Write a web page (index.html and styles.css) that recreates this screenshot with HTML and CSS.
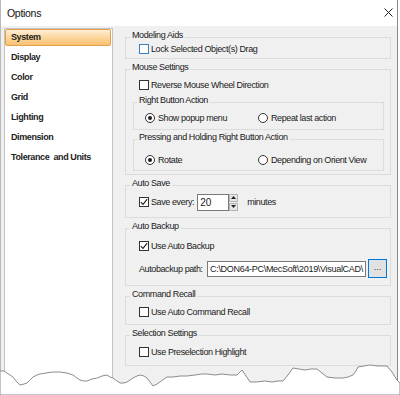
FILE: index.html
```html
<!DOCTYPE html>
<html lang="en">
<head>
    <meta charset="UTF-8">
    <title>Options</title>
    <link rel="stylesheet" href="styles.css">
</head>
<body>
    <div class="window">
        <div class="titlebar">
            <span class="title">Options</span>
            <svg class="close" width="9" height="9" viewBox="0 0 9 9">
                <path d="M0.5 0.5L8.5 8.5M8.5 0.5L0.5 8.5" stroke="#1e1e1e" stroke-width="1"/>
            </svg>
        </div>

        <div class="main">
            <ul class="nav">
                <li class="nav-item selected">System</li>
                <li class="nav-item">Display</li>
                <li class="nav-item">Color</li>
                <li class="nav-item">Grid</li>
                <li class="nav-item">Lighting</li>
                <li class="nav-item">Dimension</li>
                <li class="nav-item">Tolerance&nbsp; and Units</li>
            </ul>

            <div class="panel">
                <fieldset class="group modeling">
                    <legend>Modeling Aids</legend>
                    <div class="row check">
                        <span class="box focus"></span>Lock Selected Object(s) Drag
                    </div>
                </fieldset>

                <fieldset class="group mouse">
                    <legend>Mouse Settings</legend>
                    <div class="row check">
                        <span class="box"></span>Reverse Mouse Wheel Direction
                    </div>
                    <fieldset class="group sub right-btn">
                        <legend>Right Button Action</legend>
                        <div class="row radios">
                            <span class="opt"><span class="radio on"></span>Show popup menu</span>
                            <span class="opt"><span class="radio"></span>Repeat last action</span>
                        </div>
                    </fieldset>
                    <fieldset class="group sub holding">
                        <legend>Pressing and Holding Right Button Action</legend>
                        <div class="row radios">
                            <span class="opt"><span class="radio on"></span>Rotate</span>
                            <span class="opt"><span class="radio"></span>Depending on Orient View</span>
                        </div>
                    </fieldset>
                </fieldset>

                <fieldset class="group autosave">
                    <legend>Auto Save</legend>
                    <div class="row check save-row">
                        <span class="box">
                            <svg width="8" height="8" viewBox="0 0 8 8"><path d="M0.8 4.2L3 6.4L7.2 1.2" fill="none" stroke="#1e1e1e" stroke-width="1.1"/></svg>
                        </span>
                        <span class="save-label">Save every:</span>
                        <input class="spin-value" type="text" value="20" readonly>
                        <span class="spin">
                            <span class="spin-btn"><svg width="5" height="3" viewBox="0 0 5 3"><path d="M0 3L2.5 0L5 3Z" fill="#222"/></svg></span>
                            <span class="spin-btn"><svg width="5" height="3" viewBox="0 0 5 3"><path d="M0 0L2.5 3L5 0Z" fill="#222"/></svg></span>
                        </span>
                        <span class="unit">minutes</span>
                    </div>
                </fieldset>

                <fieldset class="group backup">
                    <legend>Auto Backup</legend>
                    <div class="row check">
                        <span class="box">
                            <svg width="8" height="8" viewBox="0 0 8 8"><path d="M0.8 4.2L3 6.4L7.2 1.2" fill="none" stroke="#1e1e1e" stroke-width="1.1"/></svg>
                        </span>Use Auto Backup
                    </div>
                    <div class="row check path-row">
                        <span class="path-label">Autobackup path:</span>
                        <input class="path-input" type="text" value="C:\DON64-PC\MecSoft\2019\VisualCAD\" readonly>
                        <button class="browse">...</button>
                    </div>
                </fieldset>

                <fieldset class="group recall">
                    <legend>Command Recall</legend>
                    <div class="row check">
                        <span class="box"></span>Use Auto Command Recall
                    </div>
                </fieldset>

                <fieldset class="group selection">
                    <legend>Selection Settings</legend>
                    <div class="row check">
                        <span class="box"></span>Use Preselection Highlight
                    </div>
                </fieldset>
            </div>
        </div>
    </div>

    <!-- bordo strappato in basso -->
    <svg class="tear" width="400" height="45" viewBox="0 350 400 45">
        <path d="M0 371 L4 371 L7 373 L10 375 L13 377 L16 381 L20 385 L24 384 L27 383 L30 380 L33 377 L37 375 L40 374 L46 373 L53 372 L60 372 L67 373 L70 374 L73 375 L77 378 L80 380 L84 381 L87 381 L92 379 L97 378 L102 376 L107 375 L110 377 L113 378 L117 381 L120 383 L124 383 L127 382 L130 380 L133 378 L137 376 L140 375 L144 376 L147 378 L150 382 L153 386 L157 384 L160 382 L164 379 L167 377 L170 377 L173 377 L180 376 L187 376 L195 375 L202 374 L207 374 L215 375 L222 374 L230 375 L237 375 L240 372 L242 370 L246 376 L250 382 L256 382 L265 381 L272 382 L278 381 L283 381 L288 375 L293 368 L299 369 L305 370 L311 369 L317 369 L322 373 L327 377 L335 378 L343 378 L348 377 L353 375 L356 371 L358 367 L364 366 L370 365 L378 366 L387 366 L392 372 L397 380 L400 383 L400 395 L0 395 Z" fill="#fff" stroke="#8c8c8c" stroke-width="1"/>
    </svg>
</body>
</html>
```

FILE: styles.css
```css
body {
    margin: 0;
    background-color: #fff;
    font-family: "Liberation Sans", Arial, sans-serif;
    font-size: 9px;
    letter-spacing: -0.4px;
    color: #1a1a1a;
    overflow: hidden;
}

.window {
    width: 398px;
    height: 395px;
    box-sizing: border-box;
    background-color: #f0f0f0;
    border-left: 1px solid #b9b9b9;
    border-right: 1px solid #8a8a8a;
    display: flex;
    flex-direction: column;
}

.titlebar {
    height: 25px;
    flex: none;
    background-color: #fff;
    display: flex;
    align-items: center;
    justify-content: space-between;
    padding: 0 4px 1px 6px;
}

.title {
    font-size: 10.5px;
    letter-spacing: -0.3px;
    color: #111;
}

.main {
    flex: 1;
    display: flex;
    gap: 12px;
    padding: 2px 0 0 3px;
    min-height: 0;
}

/* menu a sinistra */
.nav {
    list-style: none;
    margin: 0;
    padding: 0;
    width: 109px;
    box-sizing: border-box;
    background-color: #fff;
    border: 1px solid #c3c3c3;
    font-weight: bold;
    color: #222;
}

.nav-item {
    height: 20px;
    line-height: 16px;
    padding-left: 6px;
    white-space: nowrap;
}

.nav-item.selected {
    height: 17px;
    line-height: 14px;
    box-sizing: border-box;
    margin: 0 1px 3px 0;
    padding-left: 5px;
    border: 1px solid #e5a04d;
    border-radius: 2px;
    background: linear-gradient(#fdeed6, #fcd9a3 45%, #f9c06e);
}

/* pannello a destra */
.panel {
    width: 266px;
    display: flex;
    flex-direction: column;
    gap: 3px;
    padding-top: 2px;
}

.group {
    margin: 0;
    padding: 0;
    min-width: 0;
    border: 1px solid #dcdcdc;
}

.group legend {
    margin-left: 4px;
    padding: 0 2px 3px;
    line-height: 11px;
    white-space: nowrap;
}

.row {
    display: flex;
    align-items: center;
    height: 10px;
    white-space: nowrap;
}

.check {
    margin-left: 13px;
}

.box {
    width: 10px;
    height: 10px;
    box-sizing: border-box;
    flex: none;
    border: 1px solid #333;
    background-color: #fff;
    margin-right: 2px;
    display: flex;
    align-items: center;
    justify-content: center;
}

.box.focus {
    border-color: #3b7fc4;
}

.sub {
    margin: 0 6px 0 7px;
}

.sub legend {
    margin-left: 3px;
}

.radios {
    margin-left: 11px;
}

.opt {
    width: 113px;
    display: flex;
    align-items: center;
}

.radio {
    width: 10px;
    height: 10px;
    box-sizing: border-box;
    flex: none;
    border: 1px solid #333;
    border-radius: 50%;
    background-color: #fff;
    margin-right: 3px;
    display: flex;
    align-items: center;
    justify-content: center;
}

.radio.on::after {
    content: "";
    width: 4px;
    height: 4px;
    border-radius: 50%;
    background-color: #1e1e1e;
}

/* spaziature dei gruppi */
.modeling { padding-bottom: 4px; }

.mouse { padding-bottom: 3px; }
.mouse > .row { margin-top: 4px; }
.right-btn { margin-top: 5px; padding-bottom: 6px; }
.right-btn .row { margin-top: 4px; }
.holding { margin-top: 2px; padding-bottom: 5px; }
.holding .row { margin-top: 9px; }

.autosave { padding-bottom: 6px; }
.save-row { height: 18px; margin-top: 1px; }

.backup { padding-bottom: 7px; }
.backup .row { margin-top: 6px; }
.backup .path-row { height: 19px; margin-top: 8px; }

.recall { padding-bottom: 7px; }
.recall .row { margin-top: 4px; }

.selection { padding-bottom: 8px; }
.selection .row { margin-top: 5px; }

/* campi */
.save-label {
    margin-right: 3px;
}

.spin-value {
    width: 32px;
    height: 17px;
    box-sizing: border-box;
    margin: 0;
    border: 1px solid #7a7a7a;
    background-color: #fff;
    padding: 0 0 0 2px;
    font: inherit;
    font-size: 10px;
    letter-spacing: 0;
    color: #1a1a1a;
    outline: none;
}

.spin {
    width: 9px;
    height: 17px;
    display: flex;
    flex-direction: column;
    gap: 1px;
}

.spin-btn {
    flex: 1;
    background-color: #e6e6e6;
    border: 1px solid #b4b4b4;
    display: flex;
    align-items: center;
    justify-content: center;
}

.unit {
    margin-left: 9px;
}

.path-label {
    width: 68px;
    flex: none;
}

.path-input {
    width: 159px;
    height: 16px;
    box-sizing: border-box;
    margin: 0;
    border: 1px solid #7a7a7a;
    background-color: #fff;
    padding: 0 0 0 2px;
    font: inherit;
    letter-spacing: -0.3px;
    color: #1a1a1a;
    outline: none;
}

.browse {
    width: 19px;
    height: 19px;
    box-sizing: border-box;
    margin: 0 0 0 2px;
    padding: 0 0 4px;
    border: 1px solid #0078d7;
    border-radius: 0;
    background-color: #e1e1e1;
    font: inherit;
    color: #333;
}

.tear {
    position: absolute;
    left: 0;
    top: 350px;
}
```
